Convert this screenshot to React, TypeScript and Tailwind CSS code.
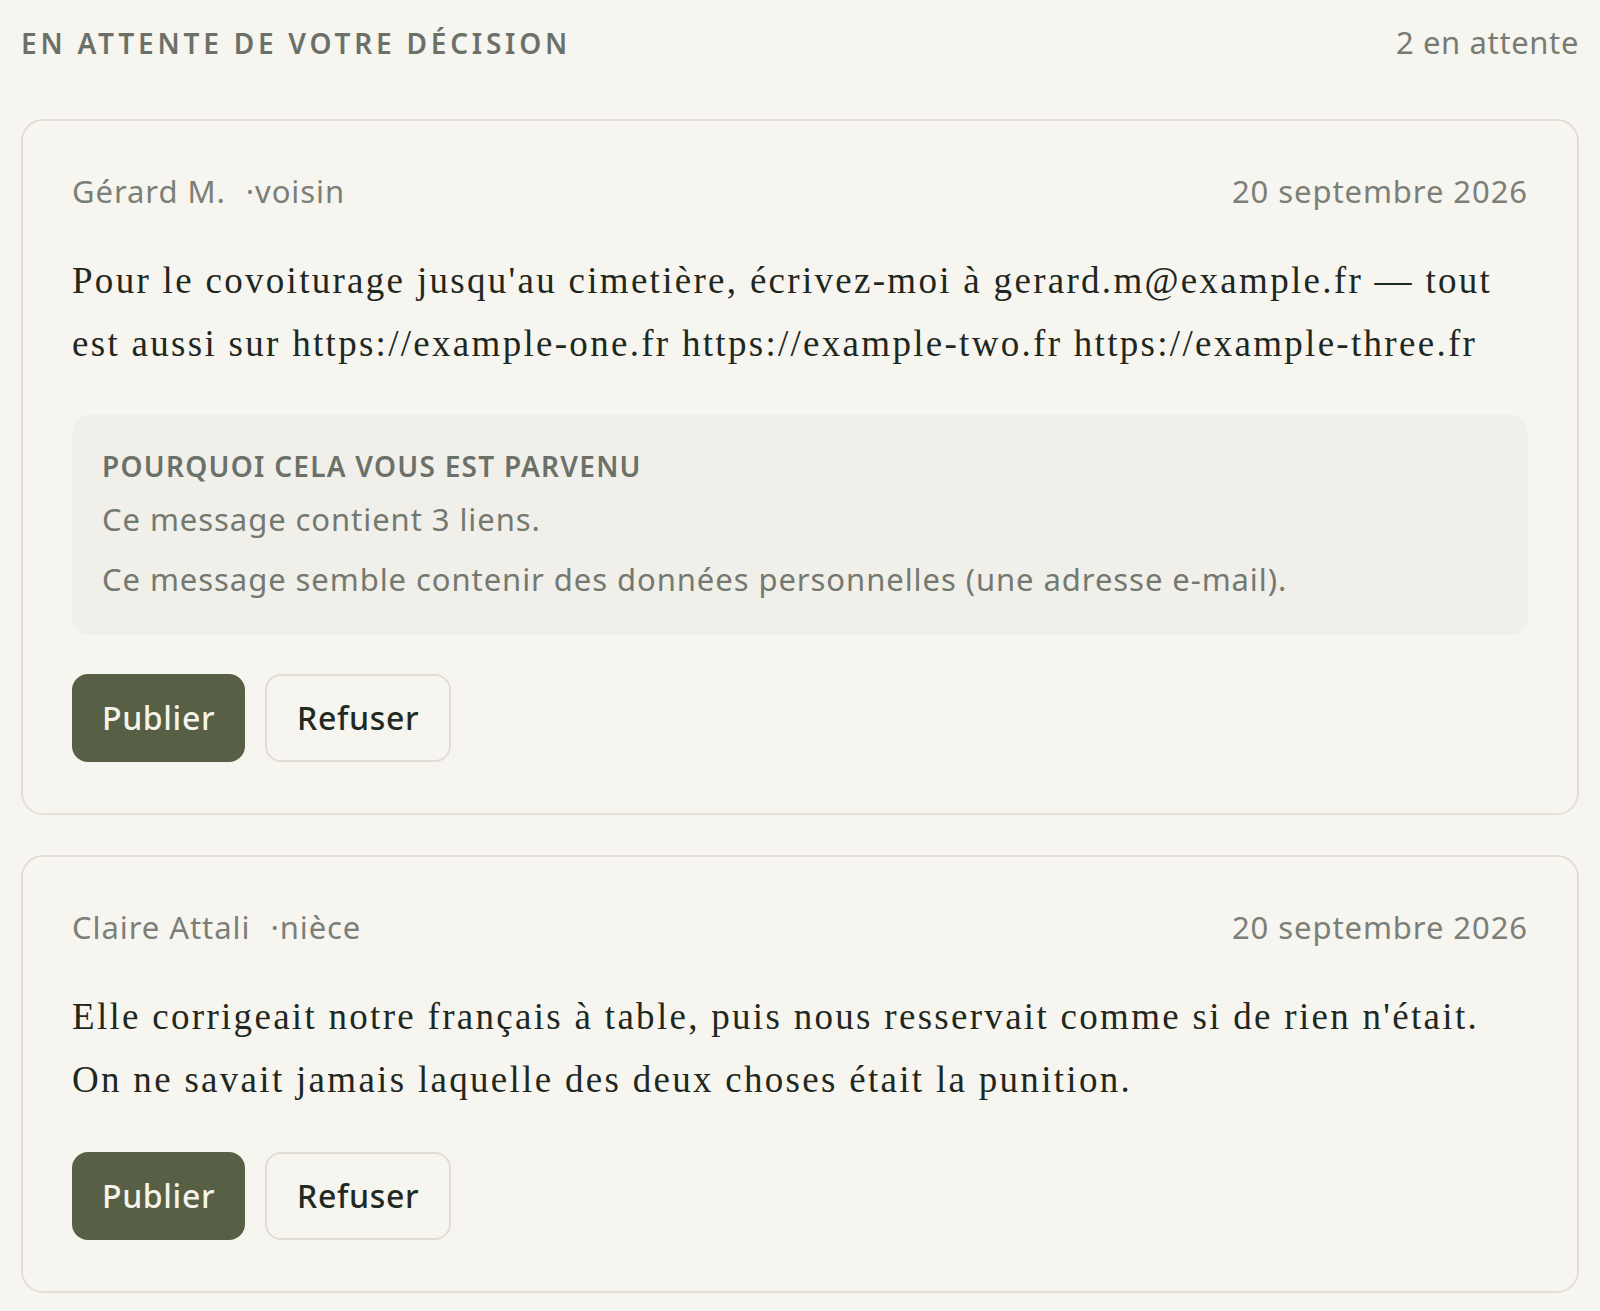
import React from "react";

const sans = { fontFamily: "'Noto Sans', sans-serif" };

function Card({
  name,
  relation,
  date,
  body,
  reasons,
}: {
  name: string;
  relation: string;
  date: string;
  body: React.ReactNode;
  reasons?: string[];
}) {
  return (
    <div className="rounded-[22px] border-2 border-[#e2dfd6] px-[49px] pt-[48px] pb-[51px]">
      <div className="flex items-baseline justify-between text-[31px] tracking-[0.03em] leading-[44px] text-[#7b7f77]">
        <div className="flex items-baseline">
          <span>{name}</span>
          <span className="ml-[20px]">·{relation}</span>
        </div>
        <span>{date}</span>
      </div>
      <p className="mt-[36px] font-['Liberation_Serif',serif] text-[37px] tracking-[0.062em] leading-[63px] text-[#1e2821]">
        {body}
      </p>
      {reasons && (
        <div className="mt-[40px] rounded-[18px] bg-[#f1efe9] px-[30px] pt-[33px] pb-[32px]">
          <div className="text-[28px] font-semibold uppercase tracking-[0.045em] leading-[36px] text-[#6b7169]">
            Pourquoi cela vous est parvenu
          </div>
          <div className="mt-[11px] flex flex-col gap-[12px] text-[31px] tracking-[0.03em] leading-[48px] text-[#747970]">
            {reasons.map((r) => (
              <p key={r}>{r}</p>
            ))}
          </div>
        </div>
      )}
      <div className={`${reasons ? "mt-[39px]" : "mt-[41px]"} flex gap-[20px]`}>
        <button className="h-[88px] rounded-[16px] bg-[#575f44] px-[30px] text-[32px] font-medium tracking-[0.02em] text-[#f5f3ea]">
          Publier
        </button>
        <button className="h-[88px] rounded-[16px] border-2 border-[#e0ddd4] px-[30px] text-[32px] font-medium tracking-[0.02em] text-[#1f2a22]">
          Refuser
        </button>
      </div>
    </div>
  );
}

export default function App() {
  return (
    <div className="min-h-screen bg-[#f7f5ef] px-[21px] pt-[22px] pb-[18px]" style={sans}>
      <div className="flex items-baseline justify-between">
        <h2 className="text-[28px] font-semibold uppercase tracking-[0.135em] leading-[40px] text-[#6b7068]">
          En attente de votre décision
        </h2>
        <span className="text-[31px] tracking-[0.02em] leading-[40px] text-[#777c73]">2 en attente</span>
      </div>
      <div className="mt-[56px] flex flex-col gap-[40px]">
        <Card
          name="Gérard M."
          relation="voisin"
          date="20 septembre 2026"
          body="Pour le covoiturage jusqu'au cimetière, écrivez-moi à gerard.m@example.fr — tout est aussi sur https://example-one.fr https://example-two.fr https://example-three.fr"
          reasons={[
            "Ce message contient 3 liens.",
            "Ce message semble contenir des données personnelles (une adresse e-mail).",
          ]}
        />
        <Card
          name="Claire Attali"
          relation="nièce"
          date="20 septembre 2026"
          body="Elle corrigeait notre français à table, puis nous resservait comme si de rien n'était. On ne savait jamais laquelle des deux choses était la punition."
        />
      </div>
    </div>
  );
}
